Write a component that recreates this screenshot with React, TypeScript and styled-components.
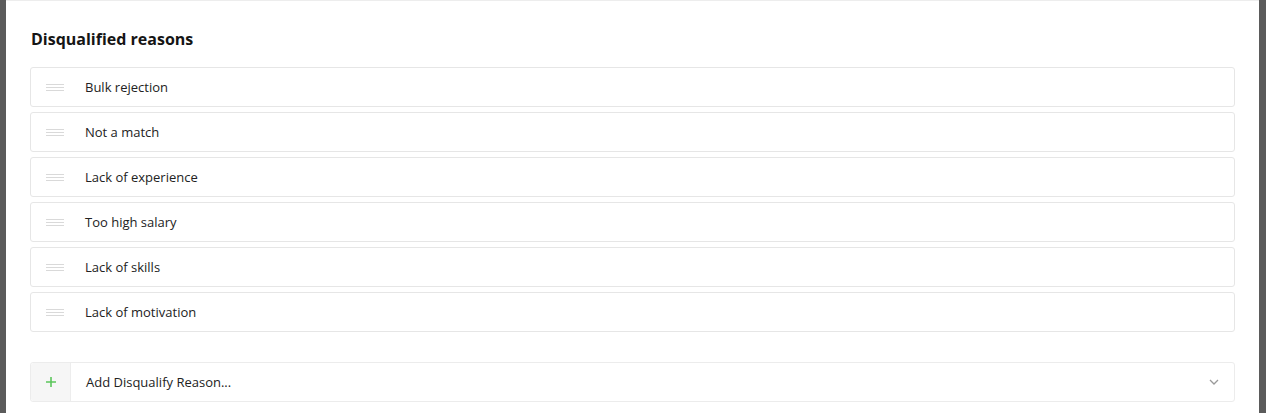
import { FC } from 'react';
import styled, { createGlobalStyle } from 'styled-components';

const GlobalStyle = createGlobalStyle`
  html, body {
    margin: 0;
    padding: 0;
    background: #5b5b5b;
    font-family: 'Open Sans', 'Lato', Arial, sans-serif;
    color: #1f1f1f;
  }
`;

const Color = {
  border: '#e6e6e6',
  handle: '#d9d9d9',
  text: '#222222',
  green: '#5cc65c',
  muted: '#9a9a9a',
  addBg: '#f6f6f6',
};

const Backdrop = styled.div`
  height: 413px;
  padding: 0 7px 0 6px;
  overflow: hidden;
`;

const Panel = styled.section`
  background: #ffffff;
  height: 100%;
  border-top: 1px solid #ededed;
  padding: 28px 24px 0 24px;
  box-sizing: border-box;
`;

const Title = styled.h2`
  margin: 0 0 18px 1px;
  font-size: 16px;
  font-weight: 700;
  line-height: 20px;
  color: #151515;
`;

const List = styled.div`
  display: flex;
  flex-direction: column;
  gap: 5px;
`;

const Row = styled.div`
  display: flex;
  align-items: center;
  height: 40px;
  box-sizing: border-box;
  border: 1px solid ${Color.border};
  border-radius: 3px;
  background: #fff;
`;

const Handle = styled.span`
  display: flex;
  flex-direction: column;
  gap: 2px;
  width: 18px;
  margin: 0 21px 0 15px;

  & > i {
    display: block;
    height: 1px;
    background: ${Color.handle};
  }
`;

const Label = styled.span`
  font-size: 13px;
  color: ${Color.text};
`;

const AddRow = styled(Row)`
  margin-top: 30px;
  border-color: #ececec;
`;

const PlusCell = styled.span`
  display: flex;
  align-items: center;
  justify-content: center;
  width: 39px;
  align-self: stretch;
  background: ${Color.addBg};
  border-right: 1px solid #ededed;
  border-radius: 3px 0 0 3px;
  color: ${Color.green};
`;

const AddLabel = styled(Label)`
  flex: 1;
  margin-left: 15px;
`;

const Chevron = styled.span`
  display: flex;
  margin-right: 15px;
  color: ${Color.muted};
`;

const reasons = [
  'Bulk rejection',
  'Not a match',
  'Lack of experience',
  'Too high salary',
  'Lack of skills',
  'Lack of motivation',
];

const ReasonRow: FC<{ label: string }> = ({ label }) => (
  <Row>
    <Handle>
      <i />
      <i />
      <i />
    </Handle>
    <Label>{label}</Label>
  </Row>
);

export default function App() {
  return (
    <>
      <GlobalStyle />
      <Backdrop>
        <Panel>
          <Title>Disqualified reasons</Title>
          <List>
            {reasons.map((r) => (
              <ReasonRow key={r} label={r} />
            ))}
          </List>
          <AddRow>
            <PlusCell>
              <svg width="10" height="10" viewBox="0 0 10 10">
                <path d="M5 0v10M0 5h10" stroke="currentColor" strokeWidth="1.6" />
              </svg>
            </PlusCell>
            <AddLabel>Add Disqualify Reason...</AddLabel>
            <Chevron>
              <svg width="10" height="6" viewBox="0 0 10 6">
                <path d="M1 1l4 4 4-4" fill="none" stroke="currentColor" strokeWidth="1.3" />
              </svg>
            </Chevron>
          </AddRow>
        </Panel>
      </Backdrop>
    </>
  );
}
